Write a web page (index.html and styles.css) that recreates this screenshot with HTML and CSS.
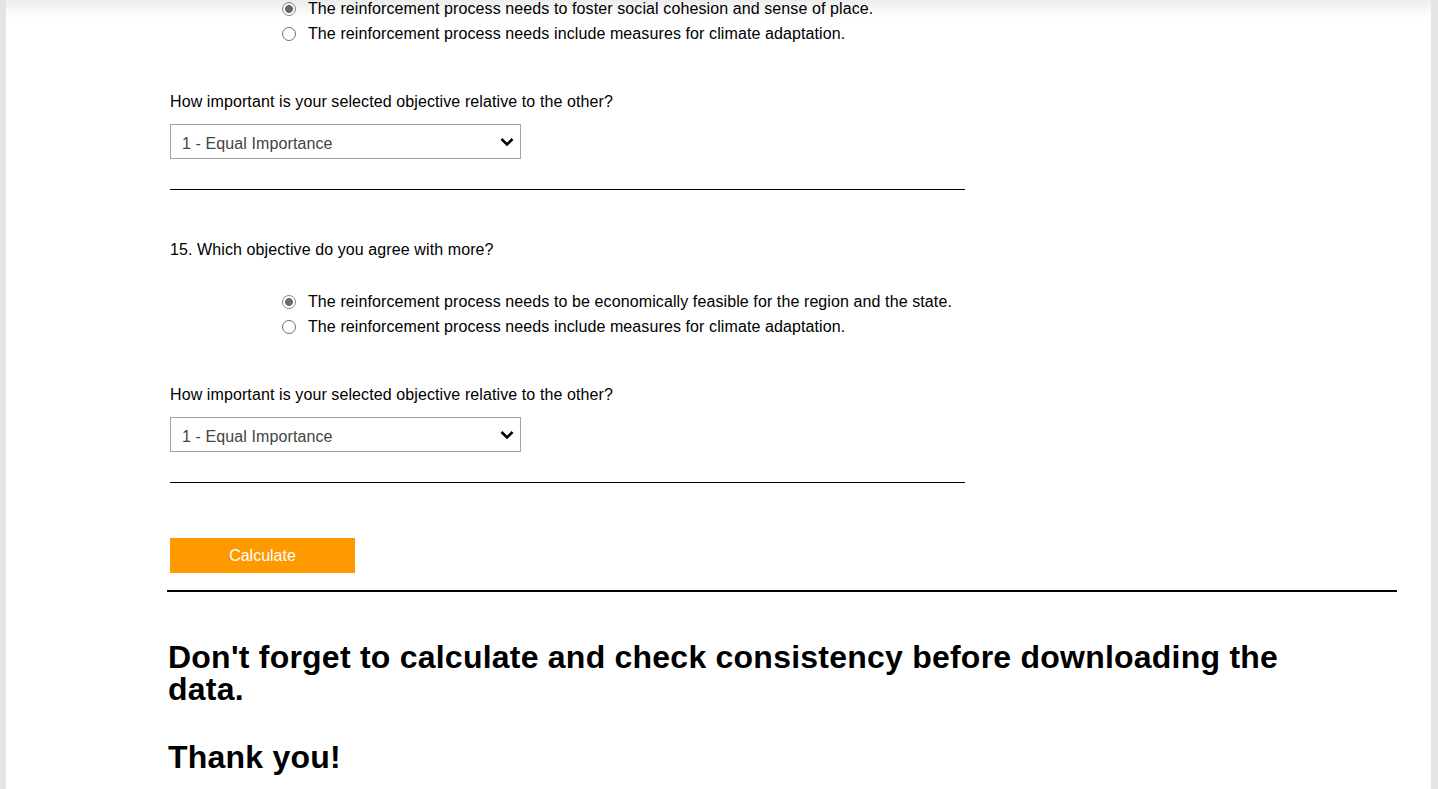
FILE: index.html
```html
<!DOCTYPE html>
<html lang="en">
<head>
<meta charset="utf-8">
<title>AHP Survey</title>
<link rel="stylesheet" href="styles.css">
</head>
<body>
<div class="top-shade"></div>
<div class="page">
  <div class="main">
    <form class="survey">
      <div class="radios first">
        <label class="radio-row"><input type="radio" name="q14" checked> The reinforcement process needs to foster social cohesion and sense of place.</label>
        <label class="radio-row"><input type="radio" name="q14"> The reinforcement process needs include measures for climate adaptation.</label>
      </div>
      <p class="importance">How important is your selected objective relative to the other?</p>
      <div class="select-wrap">
        <select class="imp-select">
          <option>1 - Equal Importance</option>
        </select>
        <svg class="chev" width="14" height="10" viewBox="0 0 14 10"><path d="M1.5 2 L7 7.5 L12.5 2" fill="none" stroke="#000" stroke-width="2.6"/></svg>
      </div>
      <div class="sep"></div>

      <p class="question">15. Which objective do you agree with more?</p>
      <div class="radios">
        <label class="radio-row"><input type="radio" name="q15" checked> The reinforcement process needs to be economically feasible for the region and the state.</label>
        <label class="radio-row"><input type="radio" name="q15"> The reinforcement process needs include measures for climate adaptation.</label>
      </div>
      <p class="importance">How important is your selected objective relative to the other?</p>
      <div class="select-wrap">
        <select class="imp-select">
          <option>1 - Equal Importance</option>
        </select>
        <svg class="chev" width="14" height="10" viewBox="0 0 14 10"><path d="M1.5 2 L7 7.5 L12.5 2" fill="none" stroke="#000" stroke-width="2.6"/></svg>
      </div>
      <div class="sep"></div>

      <button type="button" class="calc">Calculate</button>
    </form>
    <hr class="rule">
    <h2 class="note">Don't forget to calculate and check consistency before downloading the data.</h2>
    <h2 class="thanks">Thank you!</h2>
  </div>
</div>
</body>
</html>
```

FILE: styles.css
```css
html, body {
  margin: 0;
  padding: 0;
}
body {
  background: #e4e4e4;
  font-family: "Liberation Sans", Arial, sans-serif;
  font-size: 16px;
  letter-spacing: 0.1px;
  color: #000;
}
.top-shade {
  position: fixed;
  top: 0;
  left: 6px;
  right: 7px;
  height: 18px;
  background: linear-gradient(rgba(0,0,0,0.07), rgba(0,0,0,0));
  pointer-events: none;
}
.page {
  margin: 0 7px 0 6px;
  background: #fff;
  min-height: 789px;
  overflow: hidden;
}
.main {
  margin-left: 161px;
  width: 1230px;
}
.survey {
  padding-left: 3px;
}
.radios {
  padding-left: 107px;
  margin-top: 30px;
}
.radios.first {
  margin-top: -4px;
}
.radio-row {
  display: flex;
  align-items: center;
  height: 25px;
  line-height: 18px;
}
.radio-row input {
  appearance: none;
  -webkit-appearance: none;
  width: 14px;
  height: 14px;
  margin: 0 12px 0 5px;
  border: 1px solid #6e6e6e;
  border-radius: 50%;
  background: #fff;
  box-sizing: border-box;
  flex: none;
}
.radio-row input:checked {
  border-color: #8a8a8a;
  background: radial-gradient(circle, #6b6b6b 0 3.6px, #fff 4.2px);
}
.importance {
  margin: 47px 0 0;
  line-height: 18px;
}
.question {
  margin: 51px 0 0;
  line-height: 18px;
}
.select-wrap {
  position: relative;
  width: 351px;
  margin-top: 13px;
}
.imp-select {
  appearance: none;
  -webkit-appearance: none;
  width: 351px;
  height: 35px;
  border: 1px solid #a3a3a3;
  border-radius: 0;
  background: #fff;
  color: #444;
  font-family: "Liberation Sans", Arial, sans-serif;
  font-size: 16px;
  letter-spacing: 0.1px;
  padding: 3px 0 0 11px;
  display: block;
}
.chev {
  position: absolute;
  right: 7px;
  top: 13px;
  pointer-events: none;
}
.sep {
  width: 795px;
  height: 1px;
  background: #000;
  margin-top: 30px;
}
.calc {
  display: block;
  margin-top: 55px;
  width: 185px;
  height: 35px;
  border: none;
  background: #ff9900;
  color: #fff;
  font-family: "Liberation Sans", Arial, sans-serif;
  font-size: 16px;
  padding: 0;
}
.rule {
  margin: 17px 0 0;
  border: none;
  height: 2px;
  background: #000;
}
.note {
  margin: 49px 0 0 1px;
  max-width: 1160px;
  font-size: 32px;
  line-height: 32px;
  font-weight: bold;
  letter-spacing: 0.23px;
}
.thanks {
  margin: 36px 0 0 1px;
  font-size: 32px;
  line-height: 32px;
  font-weight: bold;
  letter-spacing: 0.23px;
}
```
